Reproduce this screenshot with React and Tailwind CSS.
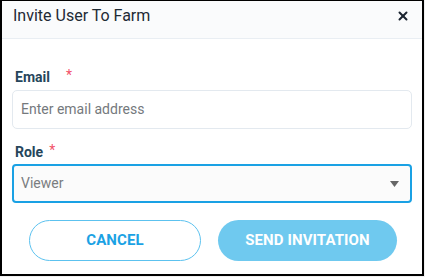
import { X } from 'lucide-react';

export default function App() {
  return (
    <div className="w-[425px] h-[277px] bg-[#f0f0f0] font-['Roboto',sans-serif]">
      <div className="w-[424px] h-[276px] border-l-2 border-t border-r-2 border-b-2 border-black bg-white flex flex-col">
        {/* header */}
        <div className="h-[38px] shrink-0 bg-[#fafbfc] border-b border-[#e9eef3] flex items-center justify-between pl-[11px] pr-[12px]">
          <span className="text-[16px] text-[#1e2a35] -mt-[7px]">Invite User To Farm</span>
          <X size={14} strokeWidth={3.4} className="text-[#1b2430] -mt-[8px]" />
        </div>

        <div className="flex flex-col px-[10px]">
          <div className="mt-[29px] flex items-center h-[18px] pl-[3px]">
            <span className="text-[14px] font-bold text-[#26465b]">Email</span>
            <span className="text-[#f2536a] text-[14px] ml-[16px] -mt-[3px]">*</span>
          </div>
          <div className="mt-[4px] h-[39px] rounded-[5px] border border-[#e3e9ef] flex items-center pl-[8px]">
            <span className="text-[14px] text-[#75797d]">Enter email address</span>
          </div>

          <div className="mt-[14px] flex items-center h-[18px] pl-[3px]">
            <span className="text-[14px] font-bold text-[#26465b]">Role</span>
            <span className="text-[#f2536a] text-[14px] ml-[6px] -mt-[3px]">*</span>
          </div>
          <div className="mt-[3px] h-[39px] rounded-[4px] border-2 border-[#1aa1e4] bg-[#fbfbfb] flex items-center justify-between pl-[7px] pr-[11px]">
            <span className="text-[14px] text-[#7a7d80]">Viewer</span>
            <svg width="9" height="6" viewBox="0 0 9 6">
              <path d="M0 0 H9 L4.5 6 Z" fill="#666" />
            </svg>
          </div>

          <div className="mt-[17px] flex items-center pl-[17px] gap-[17px]">
            <button className="w-[172px] h-[41px] rounded-full border-[1.5px] border-[#5cc2ef] text-[#1ba2e4] text-[15px] font-bold tracking-[0.1px]">
              CANCEL
            </button>
            <button className="w-[179px] h-[41px] rounded-full bg-[#6fc9ef] text-white text-[15px] font-bold tracking-[0.1px]">
              SEND INVITATION
            </button>
          </div>
        </div>
      </div>
    </div>
  );
}
